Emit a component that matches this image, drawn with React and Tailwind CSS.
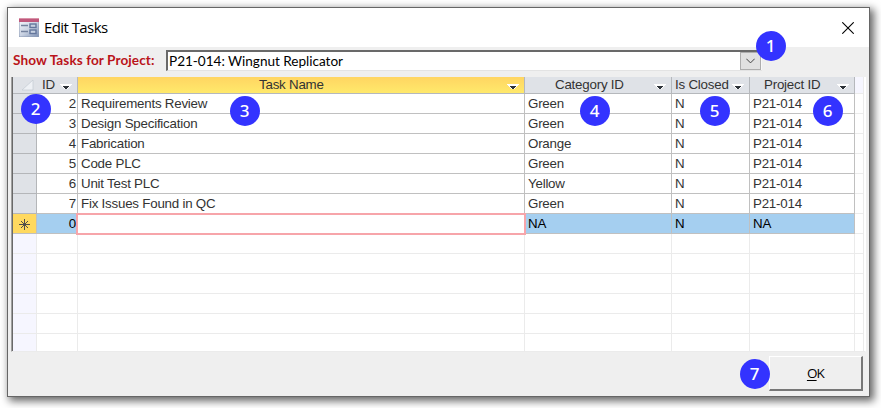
import React from "react";

const tasks = [
  [2, "Requirements Review", "Green", "N", "P21-014"],
  [3, "Design Specification", "Green", "N", "P21-014"],
  [4, "Fabrication", "Orange", "N", "P21-014"],
  [5, "Code PLC", "Green", "N", "P21-014"],
  [6, "Unit Test PLC", "Yellow", "N", "P21-014"],
  [7, "Fix Issues Found in QC", "Green", "N", "P21-014"],
];

const columns = "grid w-[851px] grid-cols-[24px_41px_447px_147px_78px_105px_9px]";
const cell = "border-r border-b border-[#c0c0c0] pl-[3px] whitespace-nowrap";
const blank = "border-r border-b border-[#ebebeb]";

function SortArrow() {
  return (
    <svg className="absolute top-[7px] right-[5px]" width="12" height="6" viewBox="0 0 12 6" shapeRendering="crispEdges">
      <path d="M0 0H12V1H11V2H10V3H9V4H8V5H4V4H3V3H2V2H1V1H0Z" fill="#fff" />
      <path d="M3 2H9V3H8V4H7V5H5V4H4V3H3Z" fill="#2c3238" />
    </svg>
  );
}

function HeaderCell({ label, labelClass, className }) {
  return (
    <div className={"relative border-r border-b border-[#b5b8bc] leading-[16px] whitespace-nowrap " + className}>
      <span className={"block " + labelClass}>{label}</span>
      <SortArrow />
    </div>
  );
}

function Badge({ n, className }) {
  return (
    <div className={"absolute flex size-[30px] items-center justify-center rounded-full bg-[#3333ff] font-['Noto_Sans','Open_Sans',sans-serif] text-[17px] leading-none font-medium text-white " + className}>
      {n}
    </div>
  );
}

function FormIcon() {
  return (
    <svg width="20" height="19" viewBox="0 0 20 19">
      <defs>
        <linearGradient id="pane" x1="0" y1="0" x2="1" y2="1">
          <stop offset="0" stopColor="#f0f3f9" />
          <stop offset="0.5" stopColor="#c9d2e2" />
          <stop offset="1" stopColor="#7f92b5" />
        </linearGradient>
      </defs>
      <rect width="20" height="19" fill="#8f9db6" />
      <rect x="0.5" y="4" width="19" height="14.5" fill="url(#pane)" />
      <rect width="20" height="4" fill="#c0587c" />
      <rect width="20" height="1" fill="#d992a8" />
      <path d="M2 7.5H9M2 13.5H9" stroke="#75839f" strokeWidth="1.6" />
      <rect x="11" y="6" width="6" height="3.5" fill="#c8d2e2" stroke="#63769c" strokeWidth="1.4" />
      <rect x="11" y="12" width="6" height="3.5" fill="#c8d2e2" stroke="#63769c" strokeWidth="1.4" />
    </svg>
  );
}

export default function App() {
  return (
    <div className="relative h-[408px] w-[881px] overflow-hidden bg-white pt-[7px] pl-[7px] font-['Liberation_Sans',Arial,sans-serif] text-[13.33px] tracking-[-0.22px] text-[#333]">
      <div className="flex h-[390px] w-[863px] flex-col border border-[#666] bg-[#efefef] shadow-[3px_3px_8px_1px_rgba(0,0,0,0.6)]">
        <header className="flex h-[39px] shrink-0 items-center bg-white pr-[15px] pl-[11px]">
          <FormIcon />
          <h1 className="ml-[5px] font-['Open_Sans','Noto_Sans',sans-serif] text-[15px] tracking-[-0.58px] text-black">Edit Tasks</h1>
          <svg className="ml-auto" width="12" height="12" viewBox="0 0 12 12">
            <path d="M0.3 0.3L11.7 11.7M11.7 0.3L0.3 11.7" stroke="#000" strokeWidth="1.1" />
          </svg>
        </header>

        <div className="flex h-[30px] shrink-0 pt-[3px] pl-[5px]">
          <label className="w-[153px] font-['Lato',sans-serif] text-[13.6px] leading-[20px] font-bold tracking-[0.08px] whitespace-nowrap text-[#ba141a]">Show Tasks for Project:</label>
          <div className="flex h-[21px] w-[596px] border-t-2 border-b border-l-2 border-t-[#696969] border-b-[#e3e3e3] border-l-[#696969] bg-white">
            <span className="flex-1 pl-[1px] font-['Lato',sans-serif] text-[13.6px] leading-[19px] tracking-[-0.03px] text-black">P21-014: Wingnut Replicator</span>
            <div className="flex h-[18px] w-[21px] items-center justify-center border border-[#adadad] bg-[#e1e1e1]">
              <svg width="9" height="6" viewBox="0 0 9 6"><path d="M0.3 0.7L4.5 4.9L8.7 0.7" fill="none" stroke="#444" /></svg>
            </div>
            <div className="w-px bg-[#f8f8f8]" />
          </div>
        </div>

        <main className="ml-[3px] flex h-[275px] w-[855px] shrink-0 overflow-hidden border-r border-b border-l border-r-white border-b-[#ebebeb] border-l-[#a0a0a0] bg-white">
          <div className="w-px shrink-0 bg-[#696969]" />
          <div className="shrink-0">
            <div className={columns + " h-[17px]"}>
              <div className="border-b border-[#b5b8bc] bg-[#dfe2e7]">
                <svg width="24" height="16" viewBox="0 0 24 16"><path d="M9 13L20 3V13Z" fill="#eef1f5" stroke="#c3cad2" strokeWidth="0.7" /></svg>
              </div>
              <HeaderCell label="ID" labelClass="pl-[5px]" className="bg-[#dfe2e7]" />
              <HeaderCell label="Task Name" labelClass="pl-[181px]" className="bg-gradient-to-b from-[#ffd562] to-[#ffe96b]" />
              <HeaderCell label="Category ID" labelClass="pl-[30px]" className="bg-[#dfe2e7]" />
              <HeaderCell label="Is Closed" labelClass="pl-[3px]" className="bg-[#dfe2e7]" />
              <HeaderCell label="Project ID" labelClass="pl-[14px]" className="bg-[#dfe2e7]" />
              <div className={blank + " bg-[#f6f6ff]"} />
            </div>

            {tasks.map(([id, name, category, closed, project]) => (
              <div key={id} className={columns + " h-[20px] leading-[19px]"}>
                <div className="border-r border-b border-[#b4b6b9] bg-[#dfe2e7]" />
                <div className="border-r border-b border-[#c0c0c0] pr-[1px] text-right">{id}</div>
                <div className={cell}>{name}</div>
                <div className={cell}>{category}</div>
                <div className={cell}>{closed}</div>
                <div className={cell}>{project}</div>
                <div className={blank} />
              </div>
            ))}

            <div className={columns + " h-[20px] bg-[#a5cff0] leading-[19px] text-black"}>
              <div className="flex items-center justify-center border-r border-b border-[#c0c0c0] bg-[#ffd95f]">
                <svg className="mt-[2px]" width="11" height="11" viewBox="0 0 11 11"><path d="M5.5 0V11M0 5.5H11M2 2L9 9M9 2L2 9" stroke="#514e4a" /></svg>
              </div>
              <div className="border-b border-[#c0c0c0] pr-[2px] text-right">0</div>
              <div className="relative bg-white">
                <div className="absolute -top-px right-[-1px] bottom-[-1px] left-[-2px] border-2 border-[#f7a5aa]" />
              </div>
              <div className={cell}>NA</div>
              <div className={cell}>N</div>
              <div className={cell}>NA</div>
              <div className={blank + " bg-white"} />
            </div>

            {[0, 1, 2, 3, 4, 5].map((row) => (
              <div key={row} className={columns + " h-[20px]"}>
                <div className={blank + " bg-[#f6f6ff]"} />
                <div className={blank} />
                <div className={blank} />
                <div className={blank} />
                <div className={blank} />
                <div className={blank} />
                <div className={blank} />
              </div>
            ))}
          </div>
        </main>

        <footer className="flex justify-end pt-[4px] pr-[6px]">
          <button className="h-[35px] w-[94px] border-t border-r-2 border-b-2 border-l border-t-white border-r-[#777] border-b-[#777] border-l-white bg-[#efefef] font-['Open_Sans','Noto_Sans',sans-serif] text-[13.5px] tracking-[-0.8px] text-black">
            <span className="underline underline-offset-2">O</span>K
          </button>
        </footer>
      </div>

      <Badge n={1} className="top-[30.5px] left-[755.5px]" />
      <Badge n={2} className="top-[93.5px] left-[20.5px]" />
      <Badge n={3} className="top-[95.5px] left-[229.5px]" />
      <Badge n={4} className="top-[95.5px] left-[579.5px]" />
      <Badge n={5} className="top-[95.5px] left-[699.5px]" />
      <Badge n={6} className="top-[95.5px] left-[812.5px]" />
      <Badge n={7} className="top-[358.5px] left-[739.5px]" />
    </div>
  );
}
